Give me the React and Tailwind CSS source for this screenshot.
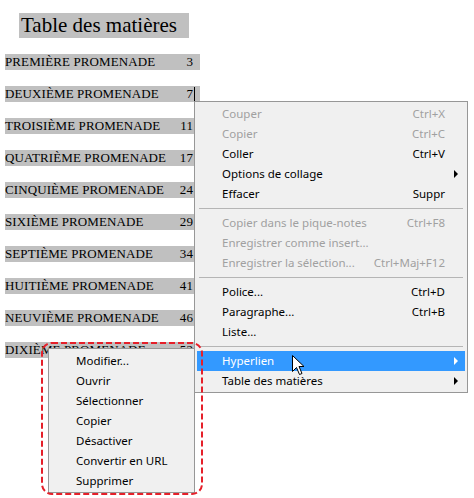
import React from "react";

const entries = [
  ["PREMIÈRE PROMENADE", "3"],
  ["DEUXIÈME PROMENADE", "7"],
  ["TROISIÈME PROMENADE", "11"],
  ["QUATRIÈME PROMENADE", "17"],
  ["CINQUIÈME PROMENADE", "24"],
  ["SIXIÈME PROMENADE", "29"],
  ["SEPTIÈME PROMENADE", "34"],
  ["HUITIÈME PROMENADE", "41"],
  ["NEUVIÈME PROMENADE", "46"],
  ["DIXIÈME PROMENADE", "52"],
];

// menu principal : null = séparateur
const mainItems = [
  { label: "Couper", key: "Ctrl+X", off: true },
  { label: "Copier", key: "Ctrl+C", off: true },
  { label: "Coller", key: "Ctrl+V" },
  { label: "Options de collage", sub: true },
  { label: "Effacer", key: "Suppr" },
  null,
  { label: "Copier dans le pique-notes", key: "Ctrl+F8", off: true },
  { label: "Enregistrer comme insert...", off: true },
  { label: "Enregistrer la sélection...", key: "Ctrl+Maj+F12", off: true },
  null,
  { label: "Police...", key: "Ctrl+D" },
  { label: "Paragraphe...", key: "Ctrl+B" },
  { label: "Liste..." },
  null,
  { label: "Hyperlien", sub: true, active: true },
  { label: "Table des matières", sub: true },
];

const subItems = [
  "Modifier...",
  "Ouvrir",
  "Sélectionner",
  "Copier",
  "Désactiver",
  "Convertir en URL",
  "Supprimer",
];

const MenuItem = ({ item }) => {
  if (!item) {
    return (
      <div className="h-[9px] flex items-center px-[2px]">
        <div className="h-px w-full bg-[#b5b5b5]" />
      </div>
    );
  }
  const color = item.active
    ? "bg-[#3399ff] text-white"
    : item.off
    ? "text-[#a0a0a0]"
    : "text-black";
  return (
    <div className={`relative h-[20px] flex items-center justify-between pl-[25px] pr-[20px] ${color}`}>
      <span>{item.label}</span>
      {item.key && <span>{item.key}</span>}
      {item.sub && (
        <span
          className={`absolute right-[7px] top-[6px] w-0 h-0 border-y-[4px] border-y-transparent border-l-[4px] ${
            item.active ? "border-l-white" : "border-l-black"
          }`}
        />
      )}
    </div>
  );
};

export default function App() {
  return (
    <div className="relative w-[474px] h-[498px] bg-white overflow-hidden">
      {/* table des matières */}
      <div className="pl-[5px] pt-[13px] font-['Liberation_Serif',serif] text-black">
        <div className="ml-[14px] w-[170px] h-[25px] bg-[#c0c0c0] pl-[2px] text-[21px] leading-[25px]">
          Table des matières
        </div>
        <div className="mt-[16px] flex flex-col gap-[16px]">
          {entries.map(([title, page], i) => (
            <div
              key={title}
              className="w-[195px] h-[16px] bg-[#c0c0c0] flex justify-between pr-[7px] text-[13px] leading-[16px] tracking-[0.1px]"
            >
              <span>{title}</span>
              <span className="relative">
                {page}
                {i === 1 && <span className="absolute right-[-2px] top-[1px] w-px h-[14px] bg-black" />}
              </span>
            </div>
          ))}
        </div>
      </div>

      {/* menu contextuel */}
      <div className="absolute left-[194px] top-[101px] w-[274px] border border-[#979797] bg-[#f0f0f0] pt-[2px] pb-[1px] px-[2px] font-['Noto_Sans',sans-serif] text-[11.5px]">
        {mainItems.map((item, i) => (
          <MenuItem key={i} item={item} />
        ))}
      </div>

      {/* sous-menu Hyperlien */}
      <div className="absolute left-[48px] top-[348px] w-[147px] border border-[#979797] bg-[#f0f0f0] pt-[2px] pb-[1px] px-[2px] font-['Noto_Sans',sans-serif] text-[11.5px]">
        {subItems.map((label) => (
          <MenuItem key={label} item={{ label }} />
        ))}
      </div>

      {/* encadré rouge */}
      <svg className="absolute left-[40px] top-[341px]" width="166" height="156">
        <rect x="2" y="2" width="160" height="151" rx="10" fill="none" stroke="#e5202a" strokeWidth="2" strokeDasharray="6 3" />
      </svg>

      {/* pointeur */}
      <svg className="absolute left-[292px] top-[355px]" width="14" height="22" viewBox="0 0 14 22">
        <path d="M0.5 0.5 L0.5 16.5 L4.5 12.5 L7.5 19.5 L10 18.5 L7 11.5 L12 11.5 Z" fill="#fff" stroke="#000" strokeWidth="1" strokeLinejoin="miter" />
      </svg>
    </div>
  );
}
